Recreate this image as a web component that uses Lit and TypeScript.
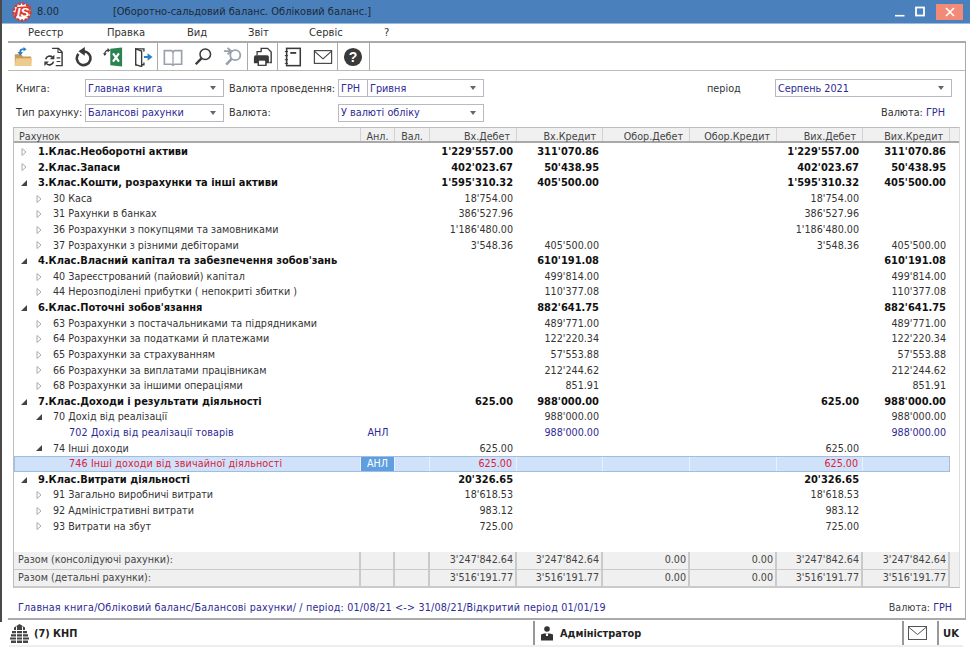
import { LitElement, html, css, svg } from "lit";
import { customElement } from "lit/decorators.js";

type Row = { t: string; lvl: number; kind?: "bold" | "blue" | "sel"; tw?: "open" | "closed" | "none"; anl?: boolean; v: (string | "")[] };

const R: Row[] = [
  { t: "1.Клас.Необоротні активи", lvl: 0, kind: "bold", tw: "closed", v: ["1'229'557.00", "311'070.86", "", "", "1'229'557.00", "311'070.86"] },
  { t: "2.Клас.Запаси", lvl: 0, kind: "bold", tw: "closed", v: ["402'023.67", "50'438.95", "", "", "402'023.67", "50'438.95"] },
  { t: "3.Клас.Кошти, розрахунки та інші активи", lvl: 0, kind: "bold", tw: "open", v: ["1'595'310.32", "405'500.00", "", "", "1'595'310.32", "405'500.00"] },
  { t: "30 Каса", lvl: 1, tw: "closed", v: ["18'754.00", "", "", "", "18'754.00", ""] },
  { t: "31 Рахунки в банках", lvl: 1, tw: "closed", v: ["386'527.96", "", "", "", "386'527.96", ""] },
  { t: "36 Розрахунки з покупцями та замовниками", lvl: 1, tw: "closed", v: ["1'186'480.00", "", "", "", "1'186'480.00", ""] },
  { t: "37 Розрахунки з різними дебіторами", lvl: 1, tw: "closed", v: ["3'548.36", "405'500.00", "", "", "3'548.36", "405'500.00"] },
  { t: "4.Клас.Власний капітал та забезпечення зобов'зань", lvl: 0, kind: "bold", tw: "open", v: ["", "610'191.08", "", "", "", "610'191.08"] },
  { t: "40 Зареєстрований (пайовий) капітал", lvl: 1, tw: "closed", v: ["", "499'814.00", "", "", "", "499'814.00"] },
  { t: "44 Нерозподілені прибутки ( непокриті збитки )", lvl: 1, tw: "closed", v: ["", "110'377.08", "", "", "", "110'377.08"] },
  { t: "6.Клас.Поточні зобов'язання", lvl: 0, kind: "bold", tw: "open", v: ["", "882'641.75", "", "", "", "882'641.75"] },
  { t: "63 Розрахунки з постачальниками та підрядниками", lvl: 1, tw: "closed", v: ["", "489'771.00", "", "", "", "489'771.00"] },
  { t: "64 Розрахунки за податками й платежами", lvl: 1, tw: "closed", v: ["", "122'220.34", "", "", "", "122'220.34"] },
  { t: "65 Розрахунки за страхуванням", lvl: 1, tw: "closed", v: ["", "57'553.88", "", "", "", "57'553.88"] },
  { t: "66 Розрахунки за виплатами працівникам", lvl: 1, tw: "closed", v: ["", "212'244.62", "", "", "", "212'244.62"] },
  { t: "68 Розрахунки за іншими операціями", lvl: 1, tw: "closed", v: ["", "851.91", "", "", "", "851.91"] },
  { t: "7.Клас.Доходи і результати діяльності", lvl: 0, kind: "bold", tw: "open", v: ["625.00", "988'000.00", "", "", "625.00", "988'000.00"] },
  { t: "70 Дохід від реалізації", lvl: 1, tw: "open", v: ["", "988'000.00", "", "", "", "988'000.00"] },
  { t: "702 Дохід від реалізації товарів", lvl: 2, kind: "blue", tw: "none", anl: true, v: ["", "988'000.00", "", "", "", "988'000.00"] },
  { t: "74 Інші доходи", lvl: 1, tw: "open", v: ["625.00", "", "", "", "625.00", ""] },
  { t: "746 Інші доходи від звичайної діяльності", lvl: 2, kind: "sel", tw: "none", anl: true, v: ["625.00", "", "", "", "625.00", ""] },
  { t: "9.Клас.Витрати діяльності", lvl: 0, kind: "bold", tw: "open", v: ["20'326.65", "", "", "", "20'326.65", ""] },
  { t: "91 Загально виробничі витрати", lvl: 1, tw: "closed", v: ["18'618.53", "", "", "", "18'618.53", ""] },
  { t: "92 Адміністративні витрати", lvl: 1, tw: "closed", v: ["983.12", "", "", "", "983.12", ""] },
  { t: "93 Витрати на збут", lvl: 1, tw: "closed", v: ["725.00", "", "", "", "725.00", ""] },
];

const HEAD = ["Вх.Дебет", "Вх.Кредит", "Обор.Дебет", "Обор.Кредит", "Вих.Дебет", "Вих.Кредит"];
const TOT: [string, string[]][] = [
  ["Разом (консолідуючі рахунки):", ["3'247'842.64", "3'247'842.64", "0.00", "0.00", "3'247'842.64", "3'247'842.64"]],
  ["Разом (детальні рахунки):", ["3'516'191.77", "3'516'191.77", "0.00", "0.00", "3'516'191.77", "3'516'191.77"]],
];

const ic = (body: unknown) => html`<div class="cell"><svg class="ic" width="20" height="20" viewBox="0 0 22 22">${body}</svg></div>`;
const D = "#3a3a3a";
const G = "#97a1ab";
const TOOLS = [
  ic(svg`<path d="M2 8h7l2 2.500h9V21H2z" fill="#c79a55"/><path d="M3 12.500h18L20 21H2z" fill="#edcb8c"/><path d="M8 7.500V5c0-1.400 1.400-2.600 4-2.600" fill="none" stroke="#2f7fc4" stroke-width="2"/><path d="M5 5.500l3 4 3-4zM11.500 0l3.500 2.500-3.500 2.500z" fill="#2f7fc4"/>`),
  ic(svg`<path d="M10 1.500h7l4 4v15h-7" fill="none" stroke="${D}" stroke-width="1.600"/><path d="M16.500 1.500v4.500h4.500" fill="none" stroke="${D}" stroke-width="1.200"/><path d="M15 12h4M15 16h4" stroke="${D}" stroke-width="1.200"/><path d="M3 13.500a4.500 4.500 0 0 1 7.500-2.200M11.500 16a4.500 4.500 0 0 1-7.500 2.400" fill="none" stroke="${D}" stroke-width="1.800"/><path d="M12.500 8.500v5h-5zM1.500 21v-5h5z" fill="${D}"/>`),
  ic(svg`<path d="M6 7.500a7.500 7.500 0 1 0 6-2.600" fill="none" stroke="${D}" stroke-width="2.800"/><path d="M13 0v9.500L6 4.800z" fill="${D}"/>`),
  ic(svg`<path d="M8 2l13-1.500v21L8 20z" fill="#2a8350"/><path d="M11 7l6.500 9M17.500 7l-6.500 9" stroke="#fff" stroke-width="2.400"/><path d="M2 8a4 4 0 0 1 4-4.500" fill="none" stroke="${D}" stroke-width="1.400"/><path d="M5 1l3 2.500L5 6zM0 7l2 3 2-3z" fill="${D}"/>`),
  ic(svg`<path d="M12 5V2H3v17.500h9V17" fill="none" stroke="${D}" stroke-width="1.500"/><path d="M3 2l6.500 2.500v17L3 19.500z" fill="#fff" stroke="${D}" stroke-width="1.500"/><path d="M12 11h5" stroke="#2f7fc4" stroke-width="2.200"/><path d="M16 7l5.500 4-5.500 4z" fill="#2f7fc4"/>`),
  ic(svg`<path d="M1.500 4h8L11 5.500 12.500 4h8v15h-8L11 20l-1.500-1h-8z" fill="none" stroke="${G}" stroke-width="1.800"/><path d="M11 5.500v14" stroke="${G}" stroke-width="1.400"/>`),
  ic(svg`<circle cx="13.500" cy="8" r="5.800" fill="none" stroke="${D}" stroke-width="1.700"/><path d="M9.300 12.500L3 19" stroke="${D}" stroke-width="2.600"/>`),
  ic(svg`<circle cx="13.500" cy="9" r="5.500" fill="none" stroke="${G}" stroke-width="2"/><path d="M9.500 13L3.500 19.500" stroke="${G}" stroke-width="2.800"/><path d="M1 4.500h7M5 1l4 3.500L5 8" fill="none" stroke="${G}" stroke-width="2"/>`),
  ic(svg`<path d="M9 5V1.500h7l4 4V17h-2" fill="#fff" stroke="${D}" stroke-width="1.500"/><path d="M3.500 9h12a2 2 0 0 1 2 2v7h-2.500v3H5v-3H1v-6.500A2.500 2.500 0 0 1 3.500 9z" fill="${D}"/><rect x="6" y="14.500" width="8" height="5.500" fill="#fff" stroke="${D}"/><path d="M4.500 9V5h5" fill="none" stroke="${D}" stroke-width="1.400"/>`),
  ic(svg`<rect x="4" y="1.500" width="15" height="19" fill="none" stroke="${D}" stroke-width="1.700"/><path d="M8 6.500h6.500" stroke="${D}" stroke-width="2"/><path d="M2 5h3.500M2 9.500h3.500M2 14h3.500M2 18h3.500" stroke="${D}" stroke-width="1.100"/>`),
  ic(svg`<rect x="1.500" y="4" width="19" height="14" fill="none" stroke="${D}" stroke-width="1.200"/><path d="M1.500 4.500l9.500 8.500 9.500-8.500" fill="none" stroke="${D}" stroke-width="1.200"/>`),
  ic(svg`<circle cx="11" cy="11" r="10" fill="${D}"/><text x="11" y="16.500" text-anchor="middle" font-family="Liberation Sans" font-weight="700" font-size="15.500" fill="#fff">?</text>`),
];
const GROUPS: [number, unknown[]][] = [[150, TOOLS.slice(0, 5)], [90, TOOLS.slice(5, 8)], [30, TOOLS.slice(8, 9)], [60, TOOLS.slice(9, 11)], [32, TOOLS.slice(11, 12)]];

const envelope = svg`<rect x=".5" y=".5" width="18" height="13" fill="none" stroke="#555"/><path d="M.5 1l9 7.500 9-7.500" fill="none" stroke="#555"/>`;

@customElement("app-root")
export class AppRoot extends LitElement {
  static styles = css`
    :host { display: block; width: 972px; height: 648px; overflow: hidden; background: #fff; font-family: "DejaVu Sans", sans-serif; font-size: 9.6px; color: #333; }
    .win { height: 648px; display: flex; flex-direction: column; position: relative; }
    .edge { position: absolute; left: 0; top: 0; width: 2px; height: 622px; background: #4a4a4a; }
    .title { height: 24px; flex: none; background: #4a80bb; border-bottom: 1px solid #9cbbdc; margin: 0 2px 0 2px; display: flex; align-items: center; color: #1d2a38; box-sizing: border-box; }
    .logo { width: 24px; height: 22px; margin-left: 8px; }
    .ver { margin-left: 3px; width: 76px; font-size: 9.85px; }
    .ttl { font-size: 9.85px; flex: 1; }
    .wbtn { display: flex; align-items: center; margin-right: 7px; }
    .wmax { margin-left: 10px; }
    .close { width: 27px; height: 16px; background: #f28a78; display: flex; align-items: center; justify-content: center; margin-left: 11px; }
    .menu { height: 17px; flex: none; display: flex; align-items: center; font-size: 10px; padding-left: 28px; box-sizing: border-box; }
    .menu span { white-space: nowrap; }
    .m1 { width: 79px; } .m2 { width: 80px; } .m3 { width: 61px; } .m4 { width: 61px; } .m5 { width: 75px; }
    .box { flex: 1; min-height: 0; margin: 0 6px 1px 8px; border: 2px solid #aaa; border-width: 2px 1px 2px 0; display: flex; flex-direction: column; }
    .tools { height: 27px; flex: none; display: flex; align-items: stretch; border-bottom: 1px solid #bbb; box-sizing: content-box; }
    .group { display: flex; align-items: center; border-right: 1px solid #aaa; box-sizing: border-box; }
    .cell { width: 30px; flex: none; display: flex; justify-content: center; }
    .ic { display: block; flex: none; }
    .panel { flex: 1; min-height: 0; padding-left: 5px; display: flex; flex-direction: column; }
    .filters { height: 56px; flex: none; display: grid; grid-template-columns: 69px 139px 114px 29px 117px 1fr; grid-template-rows: 18px 18px; row-gap: 6.5px; align-items: center; padding: 8px 20px 0 3px; box-sizing: border-box; font-size: 9.7px; }
    .sel { border: 1px solid #b9b9c4; height: 18px; box-sizing: border-box; display: flex; align-items: center; justify-content: space-between; color: #2e2a94; padding: 0 7px 0 2px; white-space: nowrap; background: #fff; }
    .sel::after { content: ""; border: 3px solid transparent; border-top: 4px solid #666; border-bottom: 0; }
    .cur { border: 1px solid #b9b9c4; border-right: none; height: 18px; box-sizing: border-box; display: flex; align-items: center; color: #2e2a94; padding: 0 2px; }
    .wide { grid-column: 4 / 6; }
    .lab2 { padding-left: 5px; white-space: nowrap; }
    .rhs { display: grid; grid-template-columns: 68px 177px; margin-left: 223px; align-items: center; }
    .rhs2 { text-align: right; padding-right: 7px; }
    .blue { color: #2e2a94; }
    .table { width: 947px; height: 461px; flex: none; border: 1px solid #bdbdbd; border-right-color: #ddd; box-sizing: border-box; display: flex; flex-direction: column; }
    .r { display: grid; grid-template-columns: 347px 34px 35px 87px 86px 87px 87px 86px 87px; box-sizing: border-box; }
    .head { height: 15px; background: #f0f0f0; border-bottom: 2px solid #a9a9a9; flex: none; }
    .head > div { padding: 0 6px 0 5px; border-right: 1px solid #d2d2d2; text-align: right; line-height: 17px; height: 13px; color: #444; }
    .head > div:first-child { text-align: left; }
    .head > .c { text-align: center; padding: 0; }
    .rows { flex: 1; padding-top: 1px; }
    .row { height: 15.62px; line-height: 15.62px; margin-right: 9px; }
    .row > div { padding-right: 4px; text-align: right; white-space: nowrap; }
    .row > .name { text-align: left; padding: 0; display: flex; align-items: center; }
    .row > .c { text-align: center; padding: 0; }
    .tw { width: 8px; height: 8px; flex: none; margin-right: 10px; display: block; }
    .l0 { padding-left: 6px !important; }
    .l1 { padding-left: 21px !important; }
    .l2 { padding-left: 37px !important; }
    .row.bold { font-weight: 700; color: #111; font-size: 9.9px; }
    .row.blueRow { color: #2e2a94; }
    .row.blueRow .name, .row.selRow .name { letter-spacing: .13px; }
    .row.selRow { background: #cfe2f9; color: #d8213c; outline: 1px solid #9fbfe0; outline-offset: -1px; }
    .row.selRow > div { border-right: 1px solid #e9f1fb; }
    .row.selRow > .c.on { background: #5f9fe0; color: #fff; }
    .tot { height: 17.5px; line-height: 16.5px; background: #f0f0f0; flex: none; padding-right: 9px; }
    .tot > div { padding: 0 2px 0 4px; border: 1px solid #cacaca; border-width: 0 2px 2px 0; text-align: right; color: #444; }
    .tot > div:first-child { text-align: left; }
    .status { flex: 1; display: flex; align-items: center; justify-content: space-between; color: #2e2a94; padding: 8px 13px 0 5px; }
    .path { letter-spacing: .19px; }
    .status b { font-weight: 400; color: #444; }
    .bottom { height: 26px; flex: none; margin: 0 9px 1px 9px; display: flex; box-sizing: border-box; align-items: stretch; border-bottom: 2px solid #eee; font-weight: 700; font-size: 9.75px; color: #222; }
    .b1 { width: 524px; display: flex; align-items: center; gap: 4px; padding-left: 1px; box-sizing: border-box; }
    .b1 span, .b2 span { padding-top: 1px; }
    .nm { margin-left: 1px; }
    .b2 { flex: 1; display: flex; align-items: center; gap: 7px; padding-left: 6px; border-left: 2px solid #999; }
    .b3 { width: 35px; display: flex; align-items: center; justify-content: center; border-left: 2px solid #999; padding-right: 7px; box-sizing: border-box; }
    .b4 { width: 26px; display: flex; align-items: center; justify-content: center; border-left: 2px solid #999; box-sizing: border-box; font-size: 10px; }
  `;

  private twisty(kind?: string) {
    if (kind === "none") return html`<span class="tw"></span>`;
    if (kind === "open") return html`<svg class="tw" viewBox="0 0 8 8"><path d="M7 1v6H1z" fill="#444"/></svg>`;
    return html`<svg class="tw" viewBox="0 0 8 8"><path d="M2 .5l4 3.500-4 3.500z" fill="#fff" stroke="#aaa"/></svg>`;
  }

  render() {
    return html`<div class="win">
      <div class="edge"></div>
      <div class="title">
        <svg class="logo" viewBox="0 0 24 22"><circle cx="12" cy="11" r="8.500" fill="#fff" stroke="#d93a2e" stroke-width="2.400" stroke-dasharray="2.600 1.400"/><path d="M4 15l3-9 14-1-3 11z" fill="#d93a2e"/><text x="13" y="15.500" text-anchor="middle" font-family="Liberation Sans" font-style="italic" font-weight="700" font-size="13" fill="#fff">IS</text></svg>
        <span class="ver">8.00</span>
        <span class="ttl">[Оборотно-сальдовий баланс. Обліковий баланс.]</span>
        <div class="wbtn">
          <svg width="10" height="14" viewBox="0 0 10 14"><path d="M0 10.700h9.500" stroke="#fff" stroke-width="1.600"/></svg>
          <svg class="wmax" width="10" height="12" viewBox="0 0 10 12"><rect x="1" y="1.500" width="8" height="8" fill="none" stroke="#fff" stroke-width="1.800"/></svg>
          <div class="close"><svg width="10" height="10" viewBox="0 0 10 10"><path d="M1 1l8 8M9 1L1 9" stroke="#fff" stroke-width="1.600"/></svg></div>
        </div>
      </div>
      <div class="menu"><span class="m1">Реєстр</span><span class="m2">Правка</span><span class="m3">Вид</span><span class="m4">Звіт</span><span class="m5">Сервіс</span><span>?</span></div>
      <div class="box">
        <div class="tools">${GROUPS.map(([w, g]) => html`<div class="group" style="width:${w}px">${g}</div>`)}</div>
        <div class="panel">
          <div class="filters">
            <span>Книга:</span><div class="sel">Главная книга</div>
            <span class="lab2">Валюта проведення:</span><div class="cur">ГРН</div><div class="sel">Гривня</div>
            <div class="rhs"><span>період</span><div class="sel">Серпень 2021</div></div>
            <span>Тип рахунку:</span><div class="sel">Балансові рахунки</div>
            <span class="lab2">Валюта:</span><div class="sel wide">У валюті обліку</div>
            <div class="rhs2">Валюта: <span class="blue">ГРН</span></div>
          </div>
          <div class="table">
            <div class="r head">
              <div>Рахунок</div><div class="c">Анл.</div><div class="c">Вал.</div>
              ${HEAD.map((h) => html`<div>${h}</div>`)}
            </div>
            <div class="rows">
              ${R.map((r) => html`<div class="r row ${r.kind === "bold" ? "bold" : r.kind === "blue" ? "blueRow" : r.kind === "sel" ? "selRow" : ""}">
                <div class="name l${r.lvl}">${this.twisty(r.tw)}<span>${r.t}</span></div>
                <div class="c ${r.anl ? "on" : ""}">${r.anl ? "АНЛ" : ""}</div><div></div>
                ${r.v.map((x) => html`<div>${x}</div>`)}
              </div>`)}
            </div>
            ${TOT.map(([n, v]) => html`<div class="r tot"><div>${n}</div><div></div><div></div>${v.map((x) => html`<div>${x}</div>`)}</div>`)}
          </div>
          <div class="status"><span class="path">Главная книга/Обліковий баланс/Балансові рахунки/ / період: 01/08/21 &lt;-&gt; 31/08/21/Відкритий період 01/01/19</span><span><b>Валюта:</b> ГРН</span></div>
        </div>
      </div>
      <div class="bottom">
        <div class="b1"><svg width="19" height="19" viewBox="0 0 19 19"><path d="M9.500 0L4 3.500v2.500h11V3.500z" fill="#444"/><path d="M2 7h15v2.200H2zM1 10.200h17v2.200H1zM0 13.400h19v2.200H0zM1 16.600h17V19H1z" fill="#444"/><path d="M6.500 2.500V19M12.500 2.500V19" stroke="#fff"/></svg><span class="nm">(7) КНП</span></div>
        <div class="b2"><svg width="12" height="15" viewBox="0 0 12 15"><circle cx="6" cy="3" r="2.800" fill="#333"/><path d="M0 14.500V8.500l3-1h6l3 1v6z" fill="#333"/><path d="M5 7.500h2v2.500H5z" fill="#fff"/></svg><span>Адміністратор</span></div>
        <div class="b3"><svg width="19" height="14" viewBox="0 0 19 14">${envelope}</svg></div>
        <div class="b4">UK</div>
      </div>
    </div>`;
  }
}
